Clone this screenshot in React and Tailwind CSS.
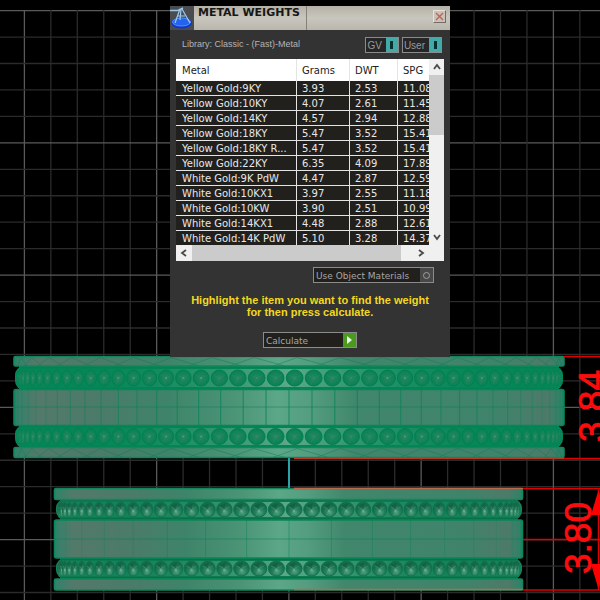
import React from "react";

const metals = [
  ["Yellow Gold:9KY", "3.93", "2.53", "11.08"],
  ["Yellow Gold:10KY", "4.07", "2.61", "11.45"],
  ["Yellow Gold:14KY", "4.57", "2.94", "12.88"],
  ["Yellow Gold:18KY", "5.47", "3.52", "15.41"],
  ["Yellow Gold:18KY R...", "5.47", "3.52", "15.41"],
  ["Yellow Gold:22KY", "6.35", "4.09", "17.89"],
  ["White Gold:9K PdW", "4.47", "2.87", "12.59"],
  ["White Gold:10KX1", "3.97", "2.55", "11.18"],
  ["White Gold:10KW", "3.90", "2.51", "10.99"],
  ["White Gold:14KX1", "4.48", "2.88", "12.61"],
  ["White Gold:14K PdW", "5.10", "3.28", "14.37"],
];

const GRID = 26.45;

function Grid() {
  const lines = [];
  for (let i = 0; i < 23; i++) {
    const x = 24.4 + i * GRID;
    lines.push(
      <line key={"v" + i} x1={x} x2={x} y1="10" y2="600" stroke={i % 5 === 0 ? "#5a5a5a" : "#2b2b2b"} strokeWidth="1.3" />
    );
    const y = 10.6 + i * GRID;
    lines.push(
      <line key={"h" + i} x1="0" x2="600" y1={y} y2={y} stroke={i % 5 === 0 ? "#5a5a5a" : "#2b2b2b"} strokeWidth="1.3" />
    );
  }
  return <g>{lines}</g>;
}

function projected(radius, step, offset) {
  const out = [];
  for (let k = -40; k <= 40; k++) {
    const a = k * step + offset;
    if (Math.abs(a) < 1.54) out.push({ k, x: 289 + radius * Math.sin(a), c: Math.cos(a) });
  }
  return out;
}

function BeadRow({ y, h, radius, step, offset, dark }) {
  const r = dark ? 7.6 : 8;
  const mid = y + h / 2;
  const beads = projected(radius, step, offset).sort((a, b) => a.c - b.c);
  return (
    <g>
      <rect x={289 - radius - 4} y={y} width={radius * 2 + 8} height={h} rx="9" fill={dark ? "#14835b" : "#06875a"} />
      <rect x={289 - radius * 0.7} y={y + 3} width={radius * 1.4} height={h - 6} fill="url(#rowGlow)" />
      {beads.map((b) => {
        const rx = Math.max(r * b.c + 0.4, 3);
        return (
          <g key={b.k}>
            <ellipse cx={b.x} cy={mid} rx={rx} ry={r} fill={dark ? "url(#beadDark)" : "url(#bead)"} stroke={dark ? "#08754d" : "#007f50"} strokeWidth="1" strokeOpacity={b.c} />
            <path
              d={`M${b.x - rx * 0.7} ${mid - r * 0.35}L${b.x} ${mid}L${b.x + rx * 0.7} ${mid - r * 0.35}M${b.x} ${mid}L${b.x - rx * 0.3} ${mid + r * 0.8}`}
              fill="none"
              stroke={dark ? "#5aa787" : "#2a9068"}
              strokeWidth="0.6"
              opacity={dark ? 0.6 : 0.7}
            />
            {dark && (
              <path
                d={`M${b.x - rx * 0.6} ${mid - r * 0.5}L${b.x} ${mid}L${b.x + rx * 0.15} ${mid - r * 0.8}Z`}
                fill="#11583e"
                opacity={0.25 + b.c * 0.35}
              />
            )}
            {dark ? (
              <circle cx={b.x} cy={mid + 1.5} r="1.2" fill="#8cc4ac" opacity="0.45" />
            ) : (
              <circle cx={b.x} cy={mid} r="1" fill="#83b8a0" opacity={b.c < 0.95 ? 0.5 * b.c : 0.15} />
            )}
          </g>
        );
      })}
      <path d={`M${289 - radius} ${y + 1.2}H${289 + radius}M${289 - radius} ${y + h - 1.2}H${289 + radius}`} stroke={dark ? "#087247" : "#008453"} strokeWidth="2.4" />
    </g>
  );
}

function Plate({ x, w, y, h, mesh }) {
  const diagonals = [];
  if (mesh) {
    for (const p of projected(w / 2 - 4, 0.16, 0.03)) {
      const d = 24 * p.c;
      diagonals.push(<path key={p.k} d={`M${p.x - d} ${y + h}L${p.x} ${y + 1}L${p.x + d * 1.3} ${y + h}`} />);
    }
  }
  return (
    <g>
      <rect x={x} y={y} width={w} height={h} rx="1.5" fill="url(#metal)" stroke="#12875d" strokeWidth="1.6" />
      <g fill="none" stroke="#0d8058" strokeWidth="0.7" opacity="0.7">{diagonals}</g>
    </g>
  );
}

function Band({ x, w, y, h, step, center, soft }) {
  return (
    <g>
      <rect x={x} y={y} width={w} height={h} rx="2" fill="url(#metal)" stroke="#08865a" strokeWidth="1.6" />
      <g stroke="#08825a" strokeWidth="0.9">
        {projected(w / 2 - 1, step, 0).map((p) => (
          <line key={p.k} x1={p.x} x2={p.x} y1={y} y2={y + h} opacity={(soft ? 0.5 : 0.9) * Math.max(p.c, 0.35)} />
        ))}
        <line x1={x} x2={x + w} y1={center} y2={center} opacity="0.6" />
      </g>
    </g>
  );
}

function Viewport() {
  return (
    <svg className="absolute inset-0 h-full w-full" viewBox="0 0 600 600" preserveAspectRatio="xMidYMid slice" role="img" aria-label="Ring model, front views">
      <defs>
        <linearGradient id="metal">
          <stop offset="0" stopColor="#30836a" />
          <stop offset="0.04" stopColor="#53796a" />
          <stop offset="0.16" stopColor="#4b7b69" />
          <stop offset="0.28" stopColor="#3e846a" />
          <stop offset="0.4" stopColor="#4b9476" />
          <stop offset="0.48" stopColor="#5ca788" />
          <stop offset="0.54" stopColor="#549d80" />
          <stop offset="0.62" stopColor="#41876c" />
          <stop offset="0.88" stopColor="#40836b" />
          <stop offset="0.97" stopColor="#4d7a69" />
          <stop offset="1" stopColor="#288467" />
        </linearGradient>
        <linearGradient id="rowGlow">
          <stop offset="0" stopColor="#2c8a66" stopOpacity="0" />
          <stop offset="0.5" stopColor="#5da98a" />
          <stop offset="1" stopColor="#2c8a66" stopOpacity="0" />
        </linearGradient>
        <radialGradient id="bead">
          <stop offset="0" stopColor="#25885f" />
          <stop offset="0.7" stopColor="#138259" />
          <stop offset="1" stopColor="#028455" />
        </radialGradient>
        <radialGradient id="beadDark" cx="0.55" cy="0.7">
          <stop offset="0" stopColor="#55a384" />
          <stop offset="0.5" stopColor="#28825f" />
          <stop offset="1" stopColor="#176a4b" />
        </radialGradient>
      </defs>
      <rect width="600" height="600" fill="#000" />
      <Grid />
      <path d="M289 458V488" stroke="#29a3a8" strokeWidth="2" />

      <BeadRow y={366} h={24} radius={270} step={0.0705} offset={0.021} />
      <BeadRow y={425} h={23} radius={270} step={0.0705} offset={0.021} />
      <Plate x={14} w={550} y={356.5} h={9.5} mesh />
      <Plate x={14} w={550} y={447.5} h={10} mesh />
      <Band x={14} w={550} y={389.5} h={36} step={0.084} center={407} />

      <BeadRow y={499} h={21} radius={229} step={0.077} offset={0.022} dark />
      <BeadRow y={558} h={21} radius={229} step={0.077} offset={0.022} dark />
      <Plate x={54.5} w={468} y={488.5} h={11} />
      <Plate x={54.5} w={468} y={579} h={11} />
      <Band x={54.5} w={468} y={520} h={38} step={0.183} center={539} soft />

      <g stroke="#e00000" strokeWidth="1.5" fill="none">
        <path d="M564 356.5H600M523 488.5H600M523 539.5H600M523 590H600M598.5 490V590" />
        <path d="M294 458.5H564" stroke="#b63a2a" />
        <path d="M564 458.5H600" />
        <path d="M294 488.5H523M294 589.5H523" stroke="#b86a4c" />
      </g>
      <path d="M598.5 490L591 515H606ZM598.5 589L591 564H606Z" fill="#ff0000" />
      <g fill="#fb0d0d" stroke="#fb0d0d" strokeWidth="0.8" fontFamily="'Liberation Sans', Arial, sans-serif" fontSize="37">
        <text transform="translate(605 442) rotate(-90)">3.84</text>
        <text transform="translate(591 574) rotate(-90)">3.80</text>
      </g>
    </svg>
  );
}

function Logo() {
  return (
    <svg className="h-6 w-6 shrink-0" viewBox="0 0 24 24" aria-hidden="true">
      <rect width="24" height="24" fill="#4a4c50" />
      <ellipse cx="11.500" cy="17" rx="10.500" ry="5.500" fill="#1238c8" />
      <ellipse cx="11.500" cy="16" rx="9" ry="4" fill="#2463ee" stroke="#5f9fff" strokeWidth="0.8" />
      <path d="M10 3L5 17M11 3L10 14M12 3L20 17M8 10H15" fill="none" stroke="#9bcbf5" strokeWidth="1.2" />
      <path d="M0 4.500H8L13 2" fill="none" stroke="#9ec8de" strokeWidth="1.4" />
    </svg>
  );
}

function Chevron({ d }) {
  return (
    <svg className="h-2 w-2" viewBox="0 0 8 8" aria-hidden="true">
      <path d={d} fill="none" stroke="#4a4a4a" strokeWidth="1.8" />
    </svg>
  );
}

function Toggle({ label }) {
  return (
    <button className="flex h-4 items-stretch border border-[#8b8b8b] bg-[#262626] text-[10px] leading-4 text-[#9a9a9a]">
      <span className="px-px">{label}</span>
      <span className="ml-[3px] flex w-3 items-center justify-center bg-[#42aaa8]">
        <span className="h-2 w-[3px] bg-[#08302f]" />
      </span>
    </button>
  );
}

export default function App() {
  return (
    <main className="relative min-h-screen w-full overflow-hidden bg-black font-['Liberation_Sans',Arial,sans-serif]">
      <Viewport />
      <section className="absolute top-[6px] left-[170px] w-[280px] bg-[#333333] pb-[9px]" aria-label="Metal weights">
        <header className="flex h-6 bg-linear-to-b from-[#b5b1a7] via-[#c9c6bd] to-[#bab6ac]">
          <Logo />
          <h1 className="w-[113px] border-r border-[#858178] pl-1 font-['DejaVu_Sans',Verdana,sans-serif] text-[11px] leading-[13px] font-bold whitespace-nowrap text-[#171717]">
            METAL WEIGHTS
          </h1>
          <button className="mt-1 mr-1 ml-auto flex h-[13px] w-[13px] items-center justify-center border border-[#e6e2da] border-r-[#716d66] border-b-[#716d66] bg-[#c8c3ba]" aria-label="Close">
            <svg className="h-[9px] w-[9px]" viewBox="0 0 9 9" aria-hidden="true">
              <path d="M1 1L8 8M8 1L1 8" stroke="#c75b50" strokeWidth="1.3" />
            </svg>
          </button>
        </header>

        <div className="flex h-[29px] items-center gap-[3px] pr-2 pl-3">
          <p className="mr-auto text-[9px] text-[#b4b4b4]">Library: Classic - (Fast)-Metal</p>
          <Toggle label="GV" />
          <Toggle label="User" />
        </div>

        <div className="mx-[6px] bg-[#f0f0f0]">
          <div className="flex h-[186px]">
            <div className="min-w-0 flex-1 overflow-hidden">
              <table className="w-[282px] table-fixed border-separate border-spacing-0 text-left font-['DejaVu_Sans',Verdana,sans-serif] text-[10px]">
                <colgroup>
                  <col className="w-[120px]" />
                  <col className="w-[53px]" />
                  <col className="w-12" />
                  <col />
                </colgroup>
                <thead>
                  <tr className="h-[22px] bg-white text-[#222222]">
                    {["Metal", "Grams", "DWT", "SPG"].map((h) => (
                      <th key={h} className="border-l border-[#e4e4e4] p-0 pl-[5px] font-normal first:border-l-0 first:pl-[6px]">
                        {h}
                      </th>
                    ))}
                  </tr>
                </thead>
                <tbody className="bg-[#21201d] leading-[13px] text-[#e8e8e8]">
                  {metals.map((row) => (
                    <tr key={row[0]}>
                      {row.map((value, i) => (
                        <td
                          key={i}
                          className="border-b border-l border-[#e4e4e4] pt-px pl-[5px] whitespace-nowrap first:border-l-0 first:pl-[6px]"
                        >
                          {value}
                        </td>
                      ))}
                    </tr>
                  ))}
                </tbody>
              </table>
            </div>
            <div className="flex w-[15px] flex-col items-center">
              <span className="flex h-4 items-center">
                <Chevron d="M1 6L4 2L7 6" />
              </span>
              <span className="h-[60px] w-full bg-[#cbcbcb]" />
              <span className="mt-auto flex h-4 items-center">
                <Chevron d="M1 2L4 6L7 2" />
              </span>
            </div>
          </div>
          <div className="flex h-4 items-center pr-[15px]">
            <span className="flex w-4 justify-center">
              <Chevron d="M6 1L2 4L6 7" />
            </span>
            <span className="h-full w-[209px] bg-[#cbcbcb]" />
            <span className="ml-auto flex w-4 justify-center">
              <Chevron d="M2 1L6 4L2 7" />
            </span>
          </div>
        </div>

        <button className="mt-[6px] mr-4 ml-auto flex h-4 w-[121px] items-stretch border border-[#8b8b8b] bg-[#21201d] text-[9px] text-[#a6a6a6]">
          <span className="pl-0.5 font-['DejaVu_Sans',Tahoma,sans-serif] leading-4">Use Object Materials</span>
          <span className="ml-auto flex w-[13px] items-center justify-center bg-[#484848]">
            <span className="h-[7px] w-[7px] rounded-full border border-[#a0a0a0]" />
          </span>
        </button>

        <p className="mx-auto mt-[11px] text-center text-[11px] leading-3 font-bold text-[#f3d91b]">
          Highlight the item you want to find the weight
          <br />
          for then press calculate.
        </p>

        <button className="mt-[14px] ml-[93px] flex h-4 w-[94px] items-stretch border border-[#8b8b8b] bg-[#21201d] text-[9px] text-[#a6a6a6]">
          <span className="pl-0.5 font-['DejaVu_Sans',Tahoma,sans-serif] leading-4">Calculate</span>
          <span className="ml-auto flex w-[13px] items-center justify-center bg-[#4a9a20]">
            <svg className="h-2 w-[5px]" viewBox="0 0 5 8" aria-hidden="true">
              <path d="M0 0L5 4L0 8Z" fill="#eef6e8" />
            </svg>
          </span>
        </button>
      </section>
    </main>
  );
}
